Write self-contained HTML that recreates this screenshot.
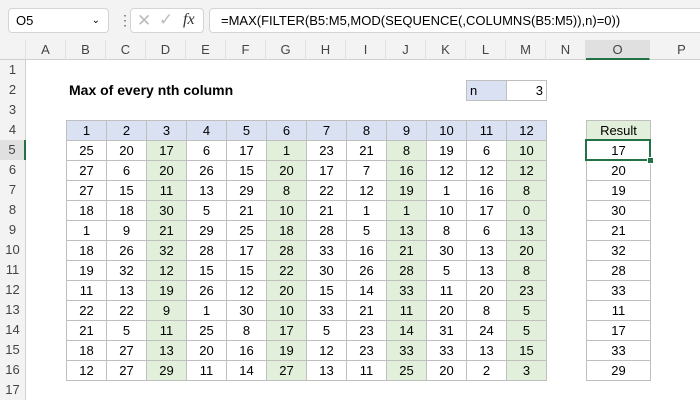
<!DOCTYPE html>
<html><head><meta charset="utf-8"><style>
body{margin:0;width:700px;height:400px;overflow:hidden;background:#fff;font-family:"Liberation Sans",sans-serif;position:relative}
.top{position:absolute;left:0;top:0;width:700px;height:40px;background:#f3f3f3}
.box{position:absolute;background:#fff;border:1px solid #d4d4d4;border-radius:4px;box-sizing:border-box}
.ch{position:absolute;top:40px;height:20px;background:#f3f3f3;border-bottom:1px solid #d0d0d0;box-sizing:border-box;font-size:13px;color:#444;text-align:center;line-height:20px;border-right:1px solid #e0e0e0}
.rh{position:absolute;left:0;width:26px;height:20px;background:#f3f3f3;border-right:1px solid #d0d0d0;box-sizing:border-box;font-size:13px;color:#444;text-align:center;line-height:20px}
table{position:absolute;border-collapse:collapse;font-size:13px;color:#000}
td{border:1px solid #bfbfbf;height:19px;padding:0;text-align:center;line-height:19px;box-sizing:border-box}
.h td{background:#d9e1f2}
.g{background:#e2efda}
</style></head><body>
<div class="top"></div>
<div class="box" style="left:8px;top:8px;width:101px;height:25px;font-size:13px;line-height:23px;padding-left:7px">O5<span style="position:absolute;right:8px;top:0;font-size:10px">&#8964;</span></div>
<div style="position:absolute;left:118px;top:12px;color:#666;font-size:14px">&#8942;</div>
<div class="box" style="left:130px;top:8px;width:74px;height:25px">
<span style="position:absolute;left:6px;top:2px;color:#bbb;font-size:17px">&#10005;</span>
<span style="position:absolute;left:28px;top:1px;color:#bbb;font-size:17px">&#10003;</span>
<span style="position:absolute;left:52px;top:2px;font-family:'Liberation Serif',serif;font-style:italic;font-size:16px;color:#333">fx</span></div>
<div class="box" style="left:209px;top:8px;width:500px;height:25px;font-size:13px;line-height:23px;padding-left:11px">=MAX(FILTER(B5:M5,MOD(SEQUENCE(,COLUMNS(B5:M5)),n)=0))</div>
<div class="ch" style="left:0;width:26px"></div>
<div class="ch" style="left:26px;width:40px">A</div><div class="ch" style="left:66px;width:40px">B</div><div class="ch" style="left:106px;width:40px">C</div><div class="ch" style="left:146px;width:40px">D</div><div class="ch" style="left:186px;width:40px">E</div><div class="ch" style="left:226px;width:40px">F</div><div class="ch" style="left:266px;width:40px">G</div><div class="ch" style="left:306px;width:40px">H</div><div class="ch" style="left:346px;width:40px">I</div><div class="ch" style="left:386px;width:40px">J</div><div class="ch" style="left:426px;width:40px">K</div><div class="ch" style="left:466px;width:40px">L</div><div class="ch" style="left:506px;width:40px">M</div><div class="ch" style="left:546px;width:40px">N</div><div class="ch" style="left:586px;width:64px;background:#e0e0e0;border-bottom:2px solid #217346">O</div><div class="ch" style="left:650px;width:64px">P</div>
<div class="rh" style="top:60px">1</div><div class="rh" style="top:80px">2</div><div class="rh" style="top:100px">3</div><div class="rh" style="top:120px">4</div><div class="rh" style="top:140px;background:#e0e0e0;border-right:2px solid #217346">5</div><div class="rh" style="top:160px">6</div><div class="rh" style="top:180px">7</div><div class="rh" style="top:200px">8</div><div class="rh" style="top:220px">9</div><div class="rh" style="top:240px">10</div><div class="rh" style="top:260px">11</div><div class="rh" style="top:280px">12</div><div class="rh" style="top:300px">13</div><div class="rh" style="top:320px">14</div><div class="rh" style="top:340px">15</div><div class="rh" style="top:360px">16</div><div class="rh" style="top:380px">17</div>
<div style="position:absolute;left:69px;top:82px;font-size:14px;font-weight:bold">Max of every nth column</div>
<table style="left:466px;top:80px"><tr><td style="width:40px;background:#d9e1f2;text-align:left;padding-left:3px">n</td><td style="width:40px;text-align:right;padding-right:3px">3</td></tr></table>
<table style="left:66px;top:120px">
<tr class="h"><td style="width:40px">1</td><td style="width:40px">2</td><td style="width:40px">3</td><td style="width:40px">4</td><td style="width:40px">5</td><td style="width:40px">6</td><td style="width:40px">7</td><td style="width:40px">8</td><td style="width:40px">9</td><td style="width:40px">10</td><td style="width:40px">11</td><td style="width:40px">12</td></tr>
<tr><td>25</td><td>20</td><td class="g">17</td><td>6</td><td>17</td><td class="g">1</td><td>23</td><td>21</td><td class="g">8</td><td>19</td><td>6</td><td class="g">10</td></tr>
<tr><td>27</td><td>6</td><td class="g">20</td><td>26</td><td>15</td><td class="g">20</td><td>17</td><td>7</td><td class="g">16</td><td>12</td><td>12</td><td class="g">12</td></tr>
<tr><td>27</td><td>15</td><td class="g">11</td><td>13</td><td>29</td><td class="g">8</td><td>22</td><td>12</td><td class="g">19</td><td>1</td><td>16</td><td class="g">8</td></tr>
<tr><td>18</td><td>18</td><td class="g">30</td><td>5</td><td>21</td><td class="g">10</td><td>21</td><td>1</td><td class="g">1</td><td>10</td><td>17</td><td class="g">0</td></tr>
<tr><td>1</td><td>9</td><td class="g">21</td><td>29</td><td>25</td><td class="g">18</td><td>28</td><td>5</td><td class="g">13</td><td>8</td><td>6</td><td class="g">13</td></tr>
<tr><td>18</td><td>26</td><td class="g">32</td><td>28</td><td>17</td><td class="g">28</td><td>33</td><td>16</td><td class="g">21</td><td>30</td><td>13</td><td class="g">20</td></tr>
<tr><td>19</td><td>32</td><td class="g">12</td><td>15</td><td>15</td><td class="g">22</td><td>30</td><td>26</td><td class="g">28</td><td>5</td><td>13</td><td class="g">8</td></tr>
<tr><td>11</td><td>13</td><td class="g">19</td><td>26</td><td>12</td><td class="g">20</td><td>15</td><td>14</td><td class="g">33</td><td>11</td><td>20</td><td class="g">23</td></tr>
<tr><td>22</td><td>22</td><td class="g">9</td><td>1</td><td>30</td><td class="g">10</td><td>33</td><td>21</td><td class="g">11</td><td>20</td><td>8</td><td class="g">5</td></tr>
<tr><td>21</td><td>5</td><td class="g">11</td><td>25</td><td>8</td><td class="g">17</td><td>5</td><td>23</td><td class="g">14</td><td>31</td><td>24</td><td class="g">5</td></tr>
<tr><td>18</td><td>27</td><td class="g">13</td><td>20</td><td>16</td><td class="g">19</td><td>12</td><td>23</td><td class="g">33</td><td>33</td><td>13</td><td class="g">15</td></tr>
<tr><td>12</td><td>27</td><td class="g">29</td><td>11</td><td>14</td><td class="g">27</td><td>13</td><td>11</td><td class="g">25</td><td>20</td><td>2</td><td class="g">3</td></tr>
</table>
<table style="left:586px;top:120px">
<tr><td class="g" style="width:64px">Result</td></tr>
<tr><td>17</td></tr><tr><td>20</td></tr><tr><td>19</td></tr><tr><td>30</td></tr><tr><td>21</td></tr><tr><td>32</td></tr><tr><td>28</td></tr><tr><td>33</td></tr><tr><td>11</td></tr><tr><td>17</td></tr><tr><td>33</td></tr><tr><td>29</td></tr>
</table>
<div style="position:absolute;left:585px;top:139px;width:66px;height:22px;border:2px solid #217346;box-sizing:border-box"></div>
<div style="position:absolute;left:647px;top:157px;width:5px;height:5px;background:#217346;border:1px solid #fff"></div>
</body></html>
